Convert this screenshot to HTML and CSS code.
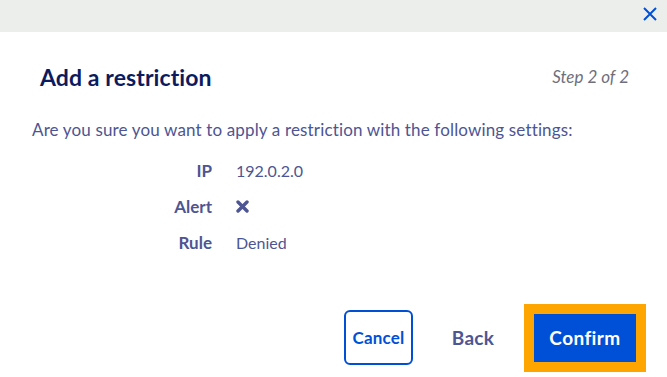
FILE: index.html
```html
<!DOCTYPE html>
<html lang="en">
<head>
    <meta charset="UTF-8" />
    <meta name="viewport" content="width=device-width, initial-scale=1.0" />
    <title>Add a restriction</title>
    <link rel="stylesheet" href="styles.css">
</head>
<body>
    <div class="modal">
        <!-- top bar with close button -->
        <div class="modal-top">
            <button class="close" aria-label="Close">
                <svg width="14" height="14" viewBox="0 0 14 14">
                    <path d="M1 1 L13 13 M13 1 L1 13" stroke="#0050d7" stroke-width="2" fill="none" />
                </svg>
            </button>
        </div>

        <div class="modal-body">
            <div class="heading">
                <h2>Add a restriction</h2>
                <span class="step">Step 2 of 2</span>
            </div>

            <p class="intro">Are you sure you want to apply a restriction with the following settings:</p>

            <dl class="summary">
                <dt>IP</dt>
                <dd>192.0.2.0</dd>
                <dt>Alert</dt>
                <dd>
                    <svg class="no-icon" width="13" height="13" viewBox="0 0 13 13">
                        <path d="M2 2 L11 11 M11 2 L2 11" stroke="#4d5592" stroke-width="3.4" stroke-linecap="round" fill="none" />
                    </svg>
                </dd>
                <dt>Rule</dt>
                <dd>Denied</dd>
            </dl>

            <div class="actions">
                <button class="cancel">Cancel</button>
                <button class="back">Back</button>
                <button class="confirm">Confirm</button>
            </div>
        </div>
    </div>
</body>
</html>
```

FILE: styles.css
```css
html, body {
    height: 100%;
}
body {
    margin: 0;
    padding: 0;
    background: #fff;
    font-family: "Lato", "Liberation Sans", sans-serif;
    color: #4d5592;
    overflow: hidden;
}
.modal {
    display: flex;
    flex-direction: column;
}
.modal-top {
    height: 32px;
    background: #eceeec;
    display: flex;
    justify-content: flex-end;
    align-items: flex-start;
}
.close {
    border: none;
    background: none;
    padding: 7px 10px 0 0;
    margin: 0;
    cursor: pointer;
    line-height: 0;
}
.modal-body {
    padding: 31px 31px 0 32px;
}
.heading {
    display: flex;
    justify-content: space-between;
    align-items: center;
    padding: 0 7px 0 8px;
}
.heading h2 {
    margin: 0;
    font-size: 23px;
    line-height: 28px;
    font-weight: 700;
    color: #0d1b5e;
    letter-spacing: 0.1px;
}
.step {
    font-size: 17px;
    font-style: italic;
    color: #6e6f7c;
    line-height: 28px;
}
.intro {
    margin: 27px 0 0 0;
    font-size: 17px;
    line-height: 24px;
    letter-spacing: 0.15px;
}
.summary {
    display: grid;
    grid-template-columns: 180px auto;
    column-gap: 24px;
    margin: 10px 0 0 0;
}
.summary dt,
.summary dd {
    margin: 0;
    height: 36px;
    display: flex;
    align-items: center;
    font-size: 16px;
}
.summary dt {
    justify-content: flex-end;
    font-weight: 700;
    font-size: 17px;
}
.actions {
    display: flex;
    justify-content: flex-end;
    align-items: center;
    margin-top: 50px;
}
.actions button {
    font-family: inherit;
    font-weight: 700;
    cursor: pointer;
}
.cancel {
    width: 69px;
    height: 55px;
    border: 2px solid #0050d7;
    border-radius: 6px;
    background: #fff;
    color: #0050d7;
    font-size: 17px;
    letter-spacing: 0.2px;
    padding: 0;
}
.back {
    width: 84px;
    height: 48px;
    margin-left: 18px;
    border: none;
    background: none;
    color: #4d5592;
    font-size: 19px;
    letter-spacing: 0.3px;
    padding: 0;
}
.confirm {
    width: 102px;
    height: 48px;
    margin-left: 19px;
    border: none;
    background: #0050d7;
    color: #fff;
    font-size: 19px;
    letter-spacing: 0.4px;
    padding: 0;
    outline: 10px solid #ffa500;
}
```
